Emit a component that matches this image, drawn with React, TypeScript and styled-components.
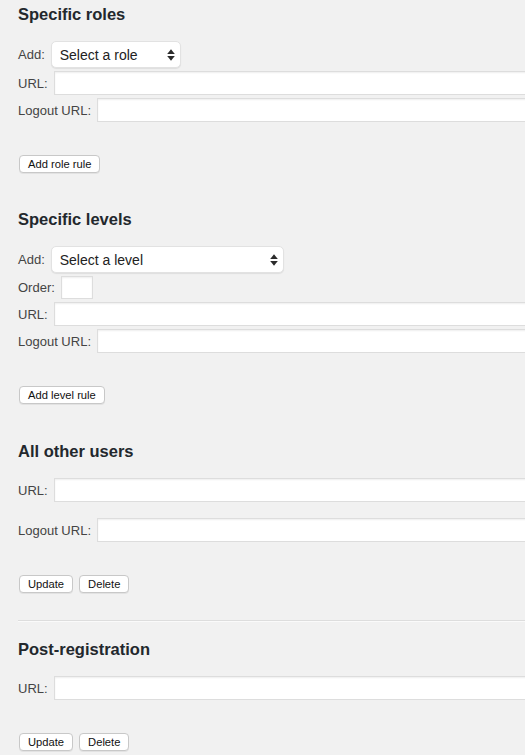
import styled, { createGlobalStyle } from 'styled-components';

const GlobalStyle = createGlobalStyle`
  html, body {
    margin: 0;
    padding: 0;
    background: #f1f1f1;
    overflow: hidden;
  }
  body {
    font-family: "Liberation Sans", Arial, sans-serif;
    font-size: 13px;
    color: #444;
  }
`;

export default function App() {
  return (
    <Page>
      <GlobalStyle />

      <Section>
        <Heading>Specific roles</Heading>
        <Fields>
          <Row>
            <Label>Add:</Label>
            <SelectBox placeholder="Select a role" width={130} />
          </Row>
          <Row>
            <Label>URL:</Label>
            <TextInput type="text" />
          </Row>
          <Row>
            <Label>Logout URL:</Label>
            <TextInput type="text" />
          </Row>
        </Fields>
        <Buttons>
          <Button type="button">Add role rule</Button>
        </Buttons>
      </Section>

      <Section>
        <Heading>Specific levels</Heading>
        <Fields>
          <Row>
            <Label>Add:</Label>
            <SelectBox placeholder="Select a level" width={233} />
          </Row>
          <Row>
            <Label>Order:</Label>
            <OrderInput type="text" />
          </Row>
          <Row>
            <Label>URL:</Label>
            <TextInput type="text" />
          </Row>
          <Row>
            <Label>Logout URL:</Label>
            <TextInput type="text" />
          </Row>
        </Fields>
        <Buttons>
          <Button type="button">Add level rule</Button>
        </Buttons>
      </Section>

      <Section $top={37}>
        <Heading>All other users</Heading>
        <Fields $gap={16}>
          <Row>
            <Label>URL:</Label>
            <TextInput type="text" />
          </Row>
          <Row>
            <Label>Logout URL:</Label>
            <TextInput type="text" />
          </Row>
        </Fields>
        <Buttons>
          <Button type="button">Update</Button>
          <Button type="button">Delete</Button>
        </Buttons>
      </Section>

      <Divider />

      <Section $top={0}>
        <Heading>Post-registration</Heading>
        <Fields>
          <Row>
            <Label>URL:</Label>
            <TextInput type="text" />
          </Row>
        </Fields>
        <Buttons>
          <Button type="button">Update</Button>
          <Button type="button">Delete</Button>
        </Buttons>
      </Section>
    </Page>
  );
}

function SelectBox({ placeholder, width }: { placeholder: string; width: number }) {
  return (
    <SelectWrap style={{ width }}>
      <Select defaultValue="">
        <option value="">{placeholder}</option>
      </Select>
      <Arrows viewBox="0 0 8 12" aria-hidden="true">
        <path d="M4 0.3 L7.8 4.9 H0.2 Z" fill="#2b2b2b" />
        <path d="M4 11.7 L7.8 7.1 H0.2 Z" fill="#2b2b2b" />
      </Arrows>
    </SelectWrap>
  );
}

const Page = styled.div`
  width: 525px;
  height: 755px;
  padding: 4px 0 0 18px;
  box-sizing: border-box;
  overflow: hidden;
`;

const Section = styled.section<{ $top?: number }>`
  display: flex;
  flex-direction: column;
  margin-top: ${(p) => p.$top ?? 36}px;

  &:first-of-type {
    margin-top: 0;
  }
`;

const Heading = styled.h2`
  margin: 0 0 17px;
  font-size: 16.5px;
  line-height: 20px;
  font-weight: 700;
  color: #23282d;
`;

const Fields = styled.div<{ $gap?: number }>`
  display: flex;
  flex-direction: column;
  gap: ${(p) => p.$gap ?? 3}px;
`;

const Row = styled.div`
  display: flex;
  align-items: center;
  gap: 6px;
`;

const Label = styled.label`
  font-size: 13px;
  color: #444;
  white-space: nowrap;
`;

const TextInput = styled.input`
  flex: none;
  width: 520px;
  height: 24px;
  box-sizing: border-box;
  margin: 0;
  padding: 2px 6px;
  background: #fff;
  border: 1px solid #ddd;
  border-radius: 0;
  box-shadow: inset 0 1px 2px rgba(0, 0, 0, 0.07);
  font: 13px "Liberation Sans", Arial, sans-serif;
  color: #32373c;
  outline: none;
`;

const OrderInput = styled(TextInput)`
  width: 32px;
  height: 23px;
`;

const SelectWrap = styled.div`
  position: relative;
  height: 27px;
`;

const Select = styled.select`
  appearance: none;
  -webkit-appearance: none;
  width: 100%;
  height: 100%;
  margin: 0;
  padding: 0 24px 0 8px;
  box-sizing: border-box;
  background: #fff;
  border: 1px solid #e2e2e2;
  border-radius: 5px;
  box-shadow: 0 1px 1px rgba(0, 0, 0, 0.08);
  font: 14px "Liberation Sans", Arial, sans-serif;
  color: #222;
  outline: none;
`;

const Arrows = styled.svg`
  position: absolute;
  right: 6px;
  top: 50%;
  width: 8px;
  height: 12px;
  transform: translateY(-50%);
  pointer-events: none;
`;

const Buttons = styled.div`
  display: flex;
  gap: 6px;
  margin-top: 33px;
  padding-left: 1px;
`;

const Button = styled.button`
  height: 18px;
  margin: 0;
  padding: 0 8px;
  box-sizing: border-box;
  background: #fff;
  border: 1px solid #c8c8c8;
  border-radius: 4px;
  box-shadow: 0 1px 0 rgba(0, 0, 0, 0.06);
  font: 11.2px/16px "Liberation Sans", Arial, sans-serif;
  color: #111;
  cursor: pointer;
`;

const Divider = styled.hr`
  margin: 27px 0 17px;
  border: 0;
  border-top: 1px solid #ddd;
  border-bottom: 1px solid #fafafa;
`;
